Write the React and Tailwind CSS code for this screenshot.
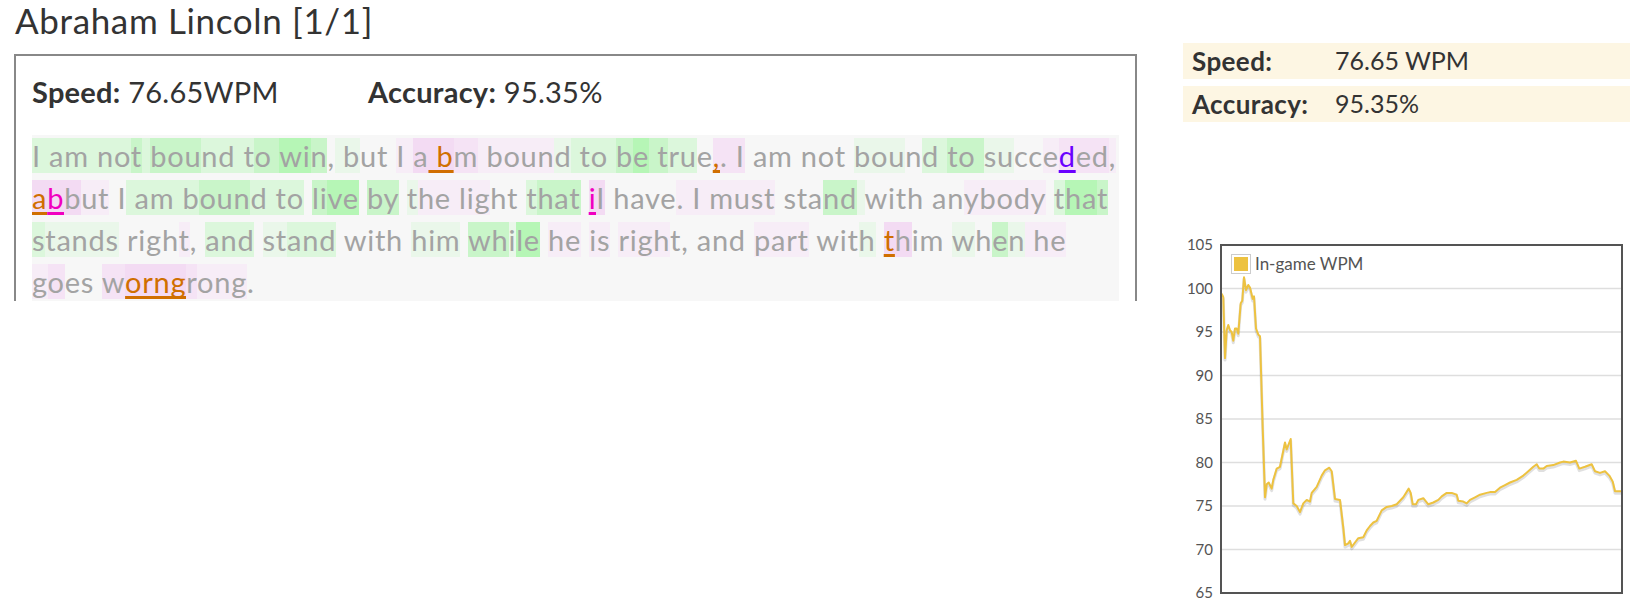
import React from "react";

const BG = {
  l: "bg-[#eaf7ea]",
  g: "bg-[#dcf7dc]",
  G: "bg-[#c9f5c9]",
  H: "bg-[#b6f6b6]",
  q: "bg-[#f7edf7]",
  p: "bg-[#f5e3f5]",
  P: "bg-[#f3dbf3]",
};

const ERR = {
  o: "text-[#d06f00] decoration-[#d06f00]",
  m: "text-[#f000c0] decoration-[#f000c0]",
  v: "text-[#6a00ff] decoration-[#6a00ff]",
};

const lines = [
  [["I am no", "g"], ["t", "G"], [" ", "g"], ["bou", "G"], ["nd t", "g"], ["o ", "G"], ["wi", "H"], ["n", "G"], [",", ""], [" b", "l"], ["ut ", ""], ["I ", "q"], ["a", "P"], [" b", "P", "o"], ["m", "p"], [" boun", "q"], ["d", "l"], [" to ", "g"], ["b", "G"], ["e", "H"], [" t", "G"], ["ru", "g"], ["e", ""], [",", "p", "o"], [". I", "p"], [" am not ", ""], ["bou", "l"], ["n", ""], ["d ", "g"], ["to ", "G"], ["su", "l"], ["cc", ""], ["e", "q"], ["d", "p", "v"], ["ed", "p"], [",", "q"]],
  [["a", "P", "o"], ["b", "P", "m"], ["b", "P"], ["ut", "q"], [" I", ""], [" am b", "g"], ["oun", "G"], ["d to", "g"], [" ", ""], ["li", "G"], ["ve", "H"], [" ", ""], ["by", "G"], [" ", ""], ["t", "l"], ["he lig", "q"], ["ht ", ""], ["t", "g"], ["hat", "G"], [" ", ""], ["i", "P", "m"], ["I", "P"], [" have", ""], [". I ", "q"], ["must", "q"], [" sta", ""], ["nd", "G"], [" ", "l"], ["with an", ""], ["ybody", "q"], [" ", ""], ["t", "g"], ["ha", "H"], ["t", "G"]],
  [["s", "g"], ["tands", "l"], [" righ", ""], ["t", "q"], [", ", ""], ["and", "g"], [" ", ""], ["st", "l"], ["and", "g"], [" with ", ""], ["him", "l"], [" ", ""], ["wh", "G"], ["i", "l"], ["le", "H"], [" ", ""], ["he", "q"], [" ", ""], ["is", "q"], [" ", ""], ["righ", "q"], ["t, and ", ""], ["part", "q"], [" wit", ""], ["h", "l"], [" ", ""], ["t", "P", "o"], ["h", "P"], ["im ", ""], ["w", "l"], ["h", ""], ["e", "G"], ["n", "l"], [" he", "q"]],
  [["g", "q"], ["o", "p"], ["es ", ""], ["w", "p"], ["orng", "P", "o"], ["r", "p"], ["ong", "q"], [".", ""]],
];

// [x in 3x zoom px from 1170, wpm]
const wpm = [
  [155, 99.4], [160, 99], [165, 92], [170, 95.2], [175, 95.8], [180, 95.2], [185, 95], [190, 94], [195, 95.4], [200, 95.4], [205, 94.8],
  [212, 98.3], [217, 98.6], [222, 101.3], [228, 99.8], [235, 100.4], [240, 100.1], [248, 98.8], [252, 99.1], [258, 95.4], [265, 94.7],
  [270, 94.5], [278, 84], [285, 76], [290, 77.5], [296, 77.7], [305, 77], [310, 78], [320, 79.3], [330, 79.5], [345, 82.3], [350, 81.5],
  [362, 82.7], [370, 75.3], [380, 75], [390, 74.3], [400, 75.3], [410, 75.7], [420, 75.5], [425, 76.5], [440, 77.2], [455, 78.5],
  [465, 79.1], [478, 79.4], [485, 79], [495, 75.8], [510, 75.7], [520, 72.5], [525, 70.5], [535, 70.7], [540, 71], [545, 70.3],
  [555, 70.8], [565, 71.3], [580, 71.4], [590, 72.2], [600, 72.7], [610, 73.1], [620, 73.3], [635, 74.5], [650, 74.9], [665, 75],
  [680, 75.2], [700, 76], [716, 77], [722, 76.5], [728, 75.2], [738, 75.2], [745, 75.7], [760, 75.9], [775, 75.2], [790, 75.4],
  [805, 75.7], [815, 76.1], [830, 76.5], [845, 76.5], [860, 76.3], [865, 75.6], [880, 75.5], [890, 75.3], [900, 75.7], [915, 76],
  [930, 76.3], [950, 76.5], [960, 76.6], [975, 76.6], [990, 77.1], [1005, 77.4], [1020, 77.7], [1040, 78], [1060, 78.5], [1075, 79],
  [1090, 79.5], [1100, 79.8], [1108, 79.3], [1120, 79.3], [1130, 79.6], [1150, 79.7], [1170, 80], [1180, 80.1], [1200, 80],
  [1218, 80.2], [1228, 79.3], [1245, 79.5], [1265, 79.8], [1275, 79], [1290, 78.8], [1305, 79], [1318, 78.5], [1328, 77.8],
  [1335, 76.7], [1355, 76.7],
];

const PLOT = { left: 38, right: 439, top: 15, bottom: 363 };
const yOf = (v) => PLOT.top + ((105 - v) * (PLOT.bottom - PLOT.top)) / 40;

function Chart() {
  const pts = wpm.map(([px, v]) => `${(px / 3 - 13).toFixed(1)},${yOf(v).toFixed(1)}`).join(" ");
  const ticks = [105, 100, 95, 90, 85, 80, 75, 70, 65];
  return (
    <svg width="447" height="379" className="mt-[108px] block">
      {ticks.map((t) => (
        <g key={t}>
          {t !== 105 && t !== 65 && (
            <line x1={PLOT.left} x2={PLOT.right} y1={yOf(t)} y2={yOf(t)} stroke="#dedede" strokeWidth="1.5" />
          )}
          <text x="30" y={yOf(t) + 5} textAnchor="end" fontSize="15" fill="#545454" fontFamily="Lato, sans-serif">
            {t}
          </text>
        </g>
      ))}
      <polyline points={pts} fill="none" stroke="rgba(0,0,0,0.12)" strokeWidth="3" transform="translate(0,2)" strokeLinejoin="round" />
      <polyline points={pts} fill="none" stroke="#edc240" strokeWidth="2" strokeLinejoin="round" />
      <rect x={PLOT.left} y={PLOT.top} width={PLOT.right - PLOT.left} height={PLOT.bottom - PLOT.top} fill="none" stroke="#545454" strokeWidth="2" />
      <rect x="48.5" y="24.5" width="19" height="19" fill="#fff" stroke="#cccccc" strokeWidth="1" />
      <rect x="51" y="27" width="14" height="14" fill="#edc240" />
      <text x="72" y="40" fontSize="17" fill="#545454" fontFamily="Lato, sans-serif">
        In-game WPM
      </text>
    </svg>
  );
}

export default function App() {
  return (
    <div className="flex h-[609px] w-[1630px] overflow-hidden bg-white font-['Lato',sans-serif] text-[#333]">
      <div className="ml-[14px] w-[1123px] shrink-0">
        <h1 className="pl-px text-[35px] font-normal leading-[40px] tracking-[0.65px]">Abraham Lincoln [1/1]</h1>
        <div className="mt-[14px] h-[247px] overflow-hidden border-2 border-b-0 border-[#888] px-[16px] pt-[16px]">
          <div className="flex text-[29px] leading-[39px] tracking-[0.25px]">
            <div className="w-[336px]">
              <b className="font-bold">Speed:</b> 76.65WPM
            </div>
            <div>
              <b className="font-bold">Accuracy:</b> 95.35%
            </div>
          </div>
          <div className="mt-[24px] bg-[#f7f7f7] text-[29px] leading-[42px] tracking-[0.75px] text-[#a3a3a3]">
            {lines.map((segs, i) => (
              <div key={i} className="whitespace-pre">
                {segs.map(([t, bg, err], j) => (
                  <span
                    key={j}
                    className={`${BG[bg] || ""} ${err ? `underline decoration-[3px] underline-offset-[3px] [text-decoration-skip-ink:none] ${ERR[err]}` : ""}`}
                  >
                    {t}
                  </span>
                ))}
              </div>
            ))}
          </div>
        </div>
      </div>
      <div className="ml-[46px] flex-1">
        <div className="mt-[43px] flex flex-col gap-[7px] text-[26px]">
          <div className="flex h-[36px] items-center bg-[#fdf6e3] pl-[9px]">
            <span className="w-[143px] font-bold tracking-[0.4px]">Speed:</span>
            <span className="text-[25px]">76.65 WPM</span>
          </div>
          <div className="flex h-[36px] items-center bg-[#fdf6e3] pl-[9px]">
            <span className="w-[143px] font-bold tracking-[0.4px]">Accuracy:</span>
            <span className="text-[25px]">95.35%</span>
          </div>
        </div>
        <Chart />
      </div>
    </div>
  );
}
